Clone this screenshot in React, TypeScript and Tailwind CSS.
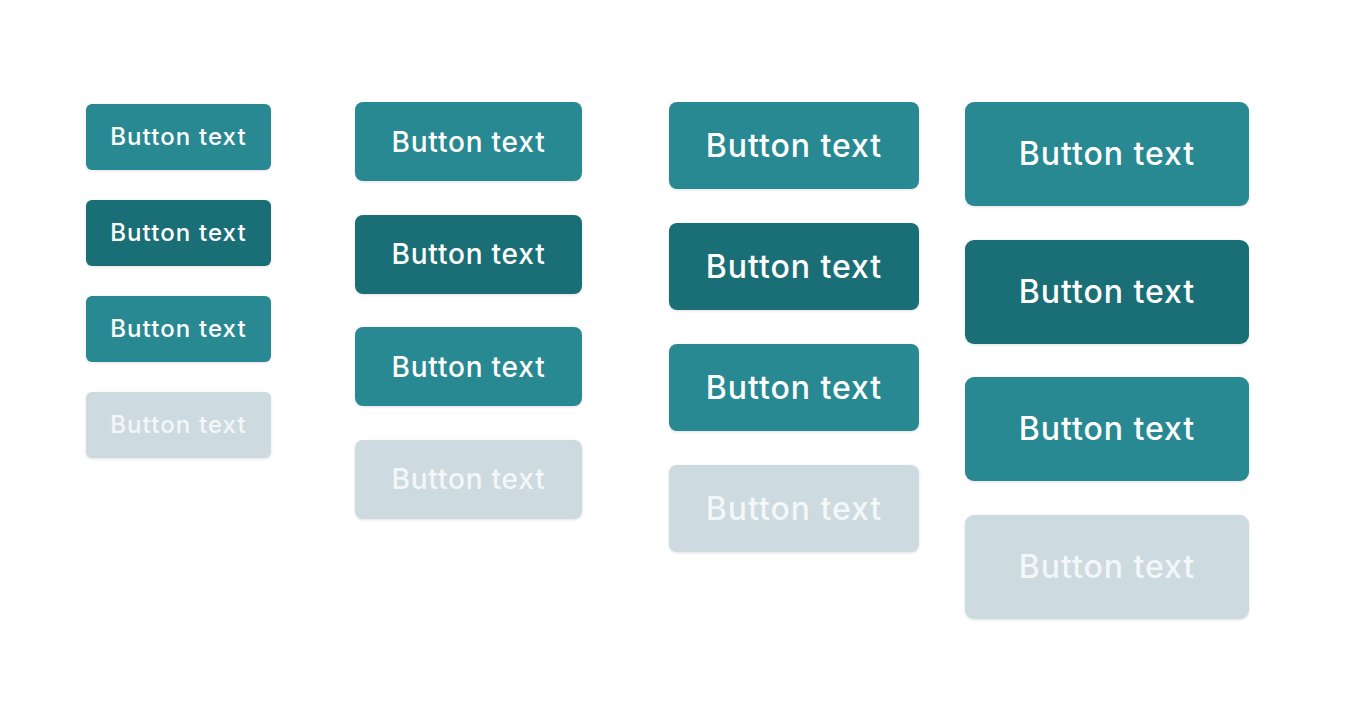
import React from "react";

type Variant = "normal" | "dark" | "disabled";

const variants: Variant[] = ["normal", "dark", "normal", "disabled"];

const bg: Record<Variant, string> = {
  normal: "bg-[#288993] text-white",
  dark: "bg-[#1a6f76] text-white",
  disabled: "bg-[#cddadf] text-[#f3f7f8]",
};

type Col = {
  wrap: string;
  btn: string;
  text: string;
};

const cols: Col[] = [
  { wrap: "ml-[86px] mt-[104px] w-[185px] gap-[30px]", btn: "h-[66px] rounded-[6px]", text: "text-[24px] tracking-[1.1px]" },
  { wrap: "ml-[84px] mt-[102px] w-[227px] gap-[33.6px]", btn: "h-[79px] rounded-[8px]", text: "text-[28px] tracking-[0.8px]" },
  { wrap: "ml-[87px] mt-[102px] w-[250px] gap-[34px]", btn: "h-[87px] rounded-[8px]", text: "text-[32px] tracking-[0.95px]" },
  { wrap: "ml-[46px] mt-[102px] w-[284px] gap-[33.6px]", btn: "h-[104px] rounded-[9px]", text: "text-[32px] tracking-[0.95px]" },
];

export default function App() {
  return (
    <div
      className="flex h-[722px] w-[1372px] items-start bg-white"
      style={{ fontFamily: "Inter, 'Noto Sans', sans-serif" }}
    >
      {cols.map((c, i) => (
        <div key={i} className={`flex flex-col ${c.wrap}`}>
          {variants.map((v, j) => (
            <button
              key={j}
              className={`flex w-full items-center justify-center font-[450] shadow-[0_1px_3px_rgba(0,0,0,0.12)] ${c.btn} ${bg[v]}`}
            >
              <span className={c.text}>Button text</span>
            </button>
          ))}
        </div>
      ))}
    </div>
  );
}
